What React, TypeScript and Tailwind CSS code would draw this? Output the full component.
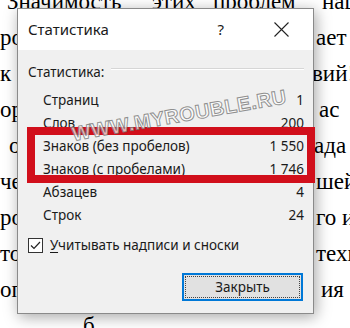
import React from 'react'

const ui = { fontFamily: '"Noto Sans", "Segoe UI", sans-serif' }
const serif = { fontFamily: '"Liberation Serif", "Times New Roman", serif' }

const rows = [
  ['Страниц', '1'],
  ['Слов', '200'],
  ['Знаков (без пробелов)', '1 550'],
  ['Знаков (с пробелами)', '1 746'],
  ['Абзацев', '4'],
  ['Строк', '24'],
]

function Page() {
  return (
    <div style={serif} className="-mt-[16px] text-[23px] leading-[36px] text-black whitespace-nowrap">
      <div className="grid grid-cols-[152px_61px_109px_auto] pl-[7px]">
        <span>Значимость</span>
        <span className="-ml-[7px]">этих</span>
        <span className="-ml-[7px]">проблем</span>
        <span className="-ml-[7px]">нашего</span>
      </div>
      <div className="grid grid-cols-[316px_auto]">
        <span>роль</span>
        <span>ает</span>
      </div>
      <div className="grid grid-cols-[312px_auto]">
        <span>к пон</span>
        <span>вий!</span>
      </div>
      <div className="grid grid-cols-[319px_auto]">
        <span>организ</span>
        <span>ас</span>
      </div>
      <div className="grid grid-cols-[314px_auto]">
        <span className="pl-[9px]">о</span>
        <span>ада</span>
      </div>
      <div className="grid grid-cols-[316px_auto]">
        <span>чело</span>
        <span>шей</span>
      </div>
      <div className="grid grid-cols-[316px_auto]">
        <span>робо</span>
        <span>го и</span>
      </div>
      <div className="grid grid-cols-[316px_auto]">
        <span>того</span>
        <span>техн</span>
      </div>
      <div className="grid grid-cols-[321px_auto]">
        <span>опт</span>
        <span>ия</span>
      </div>
      <div className="pl-[83px]">
        <span>б</span>
      </div>
    </div>
  )
}

function Dialog() {
  return (
    <div
      style={ui}
      className="absolute left-[17px] top-[8px] w-[297px] h-[306px] flex flex-col border border-[#8a8a8a] bg-[#f0f0f0] shadow-[2px_3px_14px_rgba(0,0,0,0.35)] text-[#1a1a1a]"
    >
      <div className="h-[41px] bg-white flex items-center pl-[10px] pr-[24px] shrink-0">
        <span className="text-[15px]">Статистика</span>
        <span className="ml-auto mr-[50px] text-[15px]">?</span>
        <svg width="15" height="15" viewBox="0 0 15 15" className="mb-[1px]">
          <path d="M0.5 0.5 L14.5 14.5 M14.5 0.5 L0.5 14.5" stroke="#222" strokeWidth="1.1" fill="none" />
        </svg>
      </div>
      <div className="flex-1 flex flex-col pl-[10px] pr-[9px] pt-[12px] text-[13.5px]">
        <div className="h-[20px] flex items-center">
          <span>Статистика:</span>
          <div className="flex-1 ml-[7px] mb-[6px] border-t border-[#d6d6d6] border-b-white border-b" />
        </div>
        <div className="mt-[7px] flex flex-col pl-[15px]">
          {rows.map(([k, v]) => (
            <div key={k} className="h-[23px] flex items-center justify-between">
              <span>{k}</span>
              <span>{v}</span>
            </div>
          ))}
        </div>
        <div className="mt-[8px] h-[20px] flex items-center gap-[7px]">
          <div className="w-[15px] h-[15px] border border-[#333] bg-white flex items-center justify-center">
            <svg width="13" height="13" viewBox="0 0 13 13">
              <path d="M2 6.5 L5 9.5 L11 3" stroke="#222" strokeWidth="1.2" fill="none" />
            </svg>
          </div>
          <span>
            <span className="underline underline-offset-2">У</span>читывать надписи и сноски
          </span>
        </div>
        <div className="mt-[18px] flex justify-end pr-[1px]">
          <button className="relative w-[121px] h-[28px] border-2 border-[#0078d7] bg-[#e1e1e1] text-[13.5px] text-[#1a1a1a]">
            <span className="absolute inset-[1px] border border-dotted border-[#444]" />
            Закрыть
          </button>
        </div>
      </div>
    </div>
  )
}

export default function App() {
  return (
    <div className="relative w-[350px] h-[328px] overflow-hidden bg-white">
      <Page />
      <Dialog />
      <div className="absolute left-[27px] top-[127px] w-[288px] h-[56px] border-[8px] border-[#d10f1b]" />
      <div
        style={{ fontFamily: '"Liberation Sans", Arial, sans-serif' }}
        className="absolute left-[72px] top-[124px] text-[20px] font-bold leading-none tracking-[0.5px] text-white/70 [-webkit-text-stroke:1px_rgba(110,110,110,0.75)] -rotate-[10deg] origin-left whitespace-nowrap"
      >
        WWW.MYROUBLE.RU
      </div>
    </div>
  )
}
